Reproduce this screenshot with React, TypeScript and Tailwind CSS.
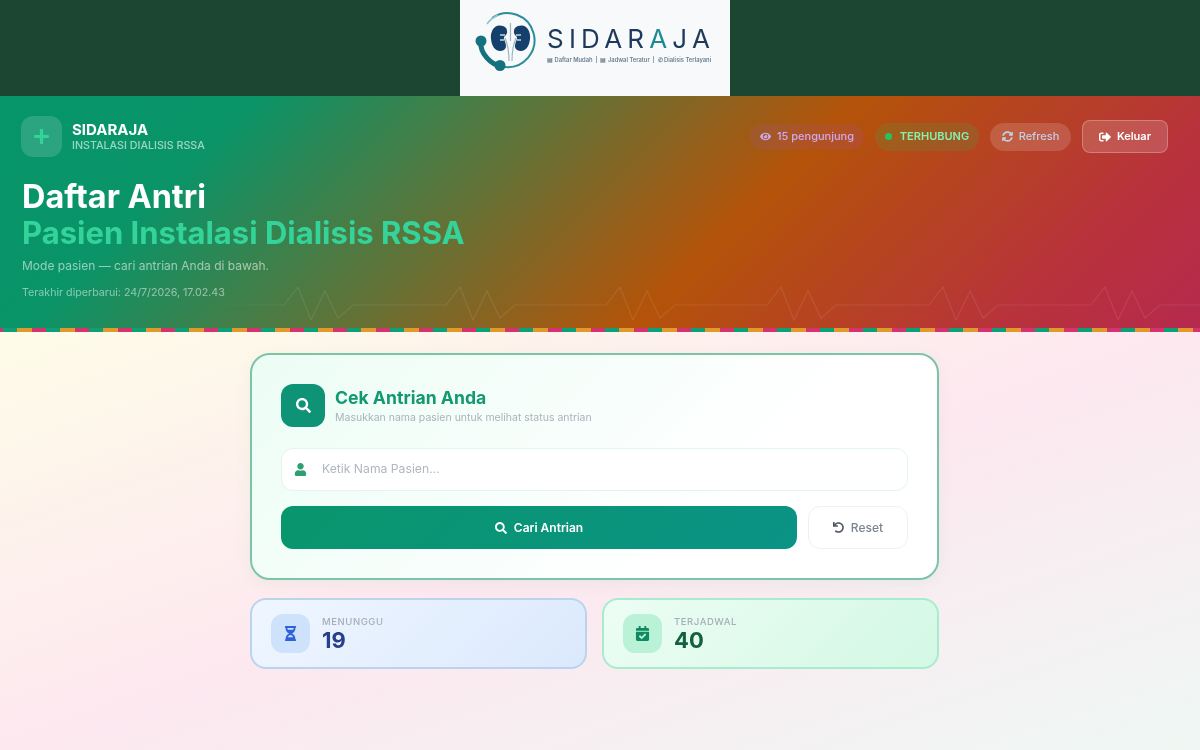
import {
  FaCalendarCheck,
  FaEye,
  FaHourglassHalf,
  FaPlus,
  FaSearch,
  FaSignOutAlt,
  FaSyncAlt,
  FaUndo,
  FaUser,
} from "react-icons/fa";

const PEAKS = [136, 298, 460, 620, 781, 943, 1105, 1267];

const pulsePath =
  "M0 27" +
  PEAKS.map(
    (p) =>
      ` L${p - 14} 27 L${p} 9 L${p + 13} 42 L${p + 27} 13 L${p + 40} 40 L${p + 55} 27`,
  ).join("");

const KIDNEY =
  "M33 19C24 16 20 25 21 32C22 42 28 46 34 43C38 40 35 35 34 32C33 29 38 28 37 24C37 21 35 20 33 19z";

function KidneyLogo() {
  return (
    <svg aria-hidden="true" className="h-[66px] w-[70px] shrink-0" viewBox="0 0 70 66">
      <path d="M22 11A27 27 0 1 1 35 60" fill="none" stroke="#2b8d9b" strokeWidth="2" />
      <path d="M17 17A27 27 0 0 1 28 8" fill="none" stroke="#8cc3cb" strokeWidth="1.6" />
      <path d={KIDNEY} fill="#15406b" />
      <path d={KIDNEY} fill="#15406b" transform="translate(81 0) scale(-1 1)" />
      <path d="M30 28h5M30 33h4M46 28h5M47 33h4" stroke="#93b3c4" strokeWidth="2" />
      <path d="M35 31C38 38 39 44 39 54M46 31C43 38 42 44 42 54M40.500 16V34" fill="none" stroke="#9db4c1" strokeWidth="1.2" />
      <path d="M11 36C10 46 21 58 31 59" fill="none" stroke="#14717f" strokeWidth="5" />
      <circle cx="11" cy="34" fill="#14717f" r="5.500" />
      <circle cx="30" cy="58.500" fill="#14717f" r="5.500" />
    </svg>
  );
}

function Pill({
  className,
  children,
}: {
  className: string;
  children: React.ReactNode;
}) {
  return (
    <div className={`flex items-center justify-center rounded-full text-[11px] font-medium ${className}`}>
      {children}
    </div>
  );
}

function StatCard({
  className,
  iconClassName,
  icon,
  label,
  value,
  valueClassName,
}: {
  className: string;
  iconClassName: string;
  icon: React.ReactNode;
  label: string;
  value: string;
  valueClassName: string;
}) {
  return (
    <div className={`flex h-[71px] flex-1 items-center gap-3 rounded-2xl border-2 px-[19px] ${className}`}>
      <div className={`flex h-[39px] w-[39px] items-center justify-center rounded-xl ${iconClassName}`}>
        {icon}
      </div>
      <div className="flex flex-col pt-[1px]">
        <span className="text-[9.500px] font-medium leading-[13px] tracking-[0.06em] text-[#a6aeb7]">
          {label}
        </span>
        <span className={`text-[22px] font-bold leading-[25px] ${valueClassName}`}>
          {value}
        </span>
      </div>
    </div>
  );
}

export default function App() {
  return (
    <div className="h-[750px] w-[1200px] overflow-hidden">
      {/* 3px bleed so the blur doesn't pick up the white page at the edges */}
      <div className="-m-[3px] flex h-[756px] w-[1206px] flex-col bg-[#fdeef4] font-['Inter',sans-serif] blur-[0.6px]">
        <div className="flex h-[99px] shrink-0 justify-center bg-[#1c4632] pr-[10px]">
          <div className="flex w-[270px] items-center gap-[7px] bg-[#f8f9fb] pb-[17px] pl-[10px] pt-[3px]">
            <KidneyLogo />
            <div className="flex flex-col pt-[8px]">
              <span className="text-[26px] font-normal leading-[32px] tracking-[0.2em] text-[#1d3a5c]">
                SIDAR<span className="text-[#1f8a96]">A</span>JA
              </span>
              <span className="mt-[1px] whitespace-nowrap text-[5.800px] font-semibold leading-[8px] text-[#6b8192]">
                ▤ Daftar Mudah &nbsp;|&nbsp; ▤ Jadwal Teratur &nbsp;|&nbsp; ✆ Dialisis Terlayani
              </span>
            </div>
          </div>
        </div>

        <header className="relative h-[236px] shrink-0 bg-[linear-gradient(135deg,#059669_0%,#0a9468_18%,#b45309_60%,#b8323c_86%,#b5294e_100%)] px-[24px] pt-5">
          <svg aria-hidden="true" className="absolute bottom-0 left-[3px] h-[54px] w-[1200px] [mask-image:linear-gradient(90deg,transparent_200px,black_300px)]" viewBox="0 0 1200 54">
            <path d={pulsePath} fill="none" stroke="#ffffff" strokeOpacity="0.09" strokeWidth="1.2" />
          </svg>

          <div className="relative flex items-start justify-between">
            <div className="flex items-center gap-[10px]">
              <div className="flex h-[41px] w-[41px] items-center justify-center rounded-xl bg-white/15 text-[#34d399]">
                <FaPlus className="h-[17px] w-[17px]" />
              </div>
              <div className="flex flex-col">
                <span className="text-[15px] font-bold leading-[18px] text-white">SIDARAJA</span>
                <span className="text-[10.700px] font-medium leading-[14px] text-white/60">
                  INSTALASI DIALISIS RSSA
                </span>
              </div>
            </div>

            <div className="flex items-center gap-[11px] pr-[11px] pt-[4px]">
              <Pill className="h-[26px] w-[114px] gap-[6px] bg-[rgba(168,85,247,0.11)] text-[#cfa8f2]">
                <FaEye className="h-[11px] w-[11px]" />
                <span>15 pengunjung</span>
              </Pill>
              <Pill className="h-[28px] w-[104px] gap-[8px] bg-[rgba(34,197,94,0.14)] text-[#86efac]">
                <span className="h-[7px] w-[7px] rounded-full bg-[#22c55e]" />
                <span className="font-semibold">TERHUBUNG</span>
              </Pill>
              <Pill className="h-[28px] w-[81px] gap-[6px] bg-white/15 text-[#c4cfe6]">
                <FaSyncAlt className="h-[11px] w-[11px]" />
                <span>Refresh</span>
              </Pill>
              <div className="flex h-[33px] w-[86px] items-center justify-center gap-[6px] rounded-lg border border-white/25 bg-white/15 text-[11px] font-semibold text-white">
                <FaSignOutAlt className="h-[12px] w-[12px]" />
                <span>Keluar</span>
              </div>
            </div>
          </div>

          <div className="relative mt-[22px] flex flex-col pl-[1px]">
            <h1 className="text-[32.400px] font-bold leading-[36px] text-white">Daftar Antri</h1>
            <h2 className="text-[31px] font-bold leading-[36px] text-[#34d399]">
              Pasien Instalasi Dialisis RSSA
            </h2>
            <p className="mt-[6px] text-[12px] leading-[18px] text-white/55">
              Mode pasien — cari antrian Anda di bawah.
            </p>
            <p className="mt-[11px] text-[10.700px] leading-[14px] text-white/50">
              Terakhir diperbarui: 24/7/2026, 17.02.43
            </p>
          </div>

          <div className="absolute bottom-0 left-[3px] h-[4px] w-full bg-[repeating-linear-gradient(90deg,#0d9f78_3px,#0d9f78_17.300px,#e09a2b_17.300px,#e09a2b_31.600px,#d4336f_31.600px,#d4336f_46px)]" />
        </header>

        <main className="flex flex-1 flex-col items-center bg-[linear-gradient(to_bottom_right,#fefce8_0%,#fde8f0_50%,#eef7f3_100%)] pr-[11px] pt-[21px]">
          <section className="flex h-[227px] w-[689px] flex-col rounded-[20px] border-2 border-[#7cc4a8] bg-[linear-gradient(135deg,#ecfdf5_0%,#ffffff_70%)] px-[29px] pt-[29px] shadow-[0_4px_16px_rgba(5,150,105,0.06)]">
            <div className="flex h-[43px] items-center gap-[10px]">
              <div className="flex h-[43px] w-[44px] items-center justify-center rounded-xl bg-[#0f9377] text-white">
                <FaSearch className="h-[15px] w-[15px]" />
              </div>
              <div className="flex flex-col">
                <span className="text-[17.600px] font-bold leading-[24px] text-[#12996f]">Cek Antrian Anda</span>
                <span className="text-[10.500px] leading-[16px] text-[#a9b3ba]">
                  Masukkan nama pasien untuk melihat status antrian
                </span>
              </div>
            </div>

            <div className="mt-[21px] flex h-[43px] items-center gap-[15px] rounded-xl border border-[#e3f5ed] bg-white px-[12px]">
              <FaUser className="h-[13px] w-[13px] text-[#2f9e74]" />
              <span className="text-[12.200px] text-[#b0b7be]">Ketik Nama Pasien...</span>
            </div>

            <div className="mt-[15px] flex h-[43px] gap-[11px]">
              <div className="flex flex-1 items-center justify-center gap-[7px] rounded-xl bg-[linear-gradient(135deg,#08966c,#0b9386)] text-[12px] font-semibold text-white">
                <FaSearch className="h-[12px] w-[12px]" />
                <span>Cari Antrian</span>
              </div>
              <div className="flex w-[100px] items-center justify-center gap-[7px] rounded-xl border border-[#eef1f3] bg-white text-[12px] font-medium text-[#7b8590]">
                <FaUndo className="h-[11px] w-[11px] text-[#4b5563]" />
                <span>Reset</span>
              </div>
            </div>
          </section>

          <div className="mt-[18px] flex w-[689px] gap-[15px]">
            <StatCard
              className="border-[#bcd3ee] bg-[linear-gradient(135deg,#eff6ff,#dbe9fd)]"
              icon={<FaHourglassHalf className="h-[15px] w-[15px] text-[#2f62d8]" />}
              iconClassName="bg-[#cfe2fb]"
              label="MENUNGGU"
              value="19"
              valueClassName="text-[#27408b]"
            />
            <StatCard
              className="border-[#a7ecce] bg-[linear-gradient(135deg,#edfdf5,#d3f8e4)]"
              icon={<FaCalendarCheck className="h-[15px] w-[15px] text-[#0e8a63]" />}
              iconClassName="bg-[#b9f2d7]"
              label="TERJADWAL"
              value="40"
              valueClassName="text-[#14603f]"
            />
          </div>
        </main>
      </div>
    </div>
  );
}
